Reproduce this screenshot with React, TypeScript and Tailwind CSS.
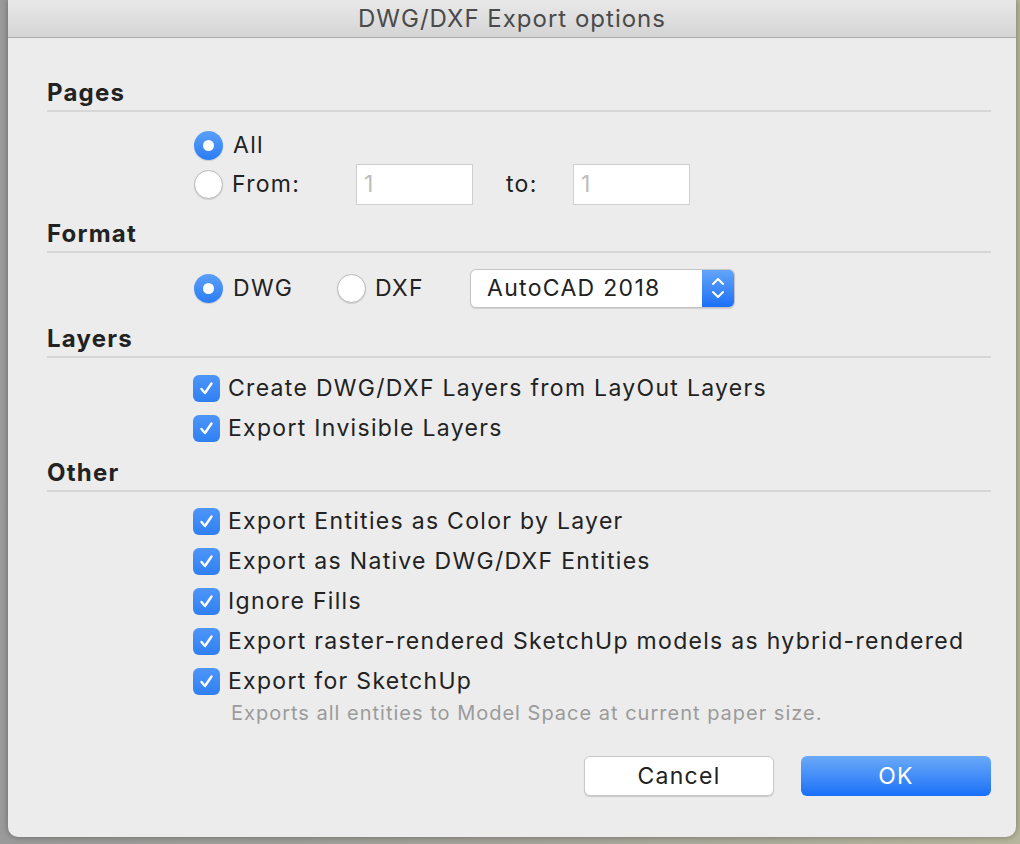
import React from "react";

const font = { fontFamily: "Inter, 'Liberation Sans', sans-serif" };
const body = "text-[23px] tracking-[1.3px] text-[#222]";

function Radio({ checked }: { checked?: boolean }) {
  if (checked) {
    return (
      <span className="flex items-center justify-center w-[29px] h-[29px] rounded-full bg-gradient-to-b from-[#5aa0f9] to-[#2a7cf5] shadow-[0_1px_1px_rgba(0,0,0,0.15)]">
        <span className="w-[11px] h-[11px] rounded-full bg-white" />
      </span>
    );
  }
  return (
    <span className="block w-[29px] h-[29px] rounded-full bg-white border border-[#b8b8b8] shadow-[0_1px_1px_rgba(0,0,0,0.12)]" />
  );
}

function Check() {
  return (
    <span className="flex items-center justify-center w-[27px] h-[27px] rounded-[6px] bg-gradient-to-b from-[#4d95f8] to-[#2f80f4] shrink-0">
      <svg width="17" height="17" viewBox="0 0 17 17" fill="none">
        <path d="M3.5 9 L7 13 L13.5 3.5" stroke="white" strokeWidth="2.4" strokeLinecap="round" strokeLinejoin="round" />
      </svg>
    </span>
  );
}

function Section({ title, mt }: { title: string; mt: string }) {
  return (
    <div className={mt}>
      <div className="text-[24px] leading-[28px] tracking-[1.2px] font-bold text-[#222]">{title}</div>
      <div className="mt-[3px] h-[2px] bg-[#d6d6d6]" />
    </div>
  );
}

function CheckRow({ label }: { label: string }) {
  return (
    <div className="flex items-center h-[40px] pl-[146px] gap-[8px]">
      <Check />
      <span className={body}>{label}</span>
    </div>
  );
}

export default function App() {
  return (
    <div className="w-[1020px] h-[844px] bg-gradient-to-r from-[#9a9a9a] via-[#a3a39a] to-[#b6b69e] flex pl-[8px] pr-[4px] pb-[7px]" style={font}>
      <div className="flex-1 flex flex-col bg-[#ececec] rounded-b-[10px] shadow-[0_0_6px_rgba(0,0,0,0.35)] overflow-hidden">
        <div className="h-[38px] shrink-0 flex items-center justify-center bg-gradient-to-b from-[#e9e9e9] to-[#d4d4d4] border-b border-[#a9a9a9]">
          <span className="text-[24px] tracking-[1px] text-[#4a4a4a]">DWG/DXF Export options</span>
        </div>

        <div className="flex flex-col pl-[39px] pr-[25px]">
          <Section title="Pages" mt="mt-[41px]" />
          <div className="mt-[14px] flex items-center h-[39px] pl-[147px] gap-[10px]">
            <Radio checked />
            <span className={body}>All</span>
          </div>
          <div className="flex items-center h-[39px] pl-[147px]">
            <Radio />
            <span className={`ml-[9px] w-[124px] ${body}`}>From:</span>
            <div className="w-[117px] h-[41px] bg-white border border-[#cfcfcf] flex items-center pl-[7px] text-[23px] text-[#bdbdbd]">1</div>
            <span className={`ml-[33px] w-[67px] ${body}`}>to:</span>
            <div className="w-[117px] h-[41px] bg-white border border-[#cfcfcf] flex items-center pl-[7px] text-[23px] text-[#bdbdbd]">1</div>
          </div>

          <Section title="Format" mt="mt-[16px]" />
          <div className="mt-[15px] flex items-center h-[40px] pl-[147px]">
            <Radio checked />
            <span className={`ml-[10px] w-[104px] ${body}`}>DWG</span>
            <Radio />
            <span className={`ml-[9px] w-[95px] ${body}`}>DXF</span>
            <div className="w-[265px] h-[39px] bg-white rounded-[6px] border border-[#c4c4c4] shadow-[0_1px_1px_rgba(0,0,0,0.12)] flex items-center overflow-hidden">
              <span className={`flex-1 pl-[16px] ${body}`}>AutoCAD 2018</span>
              <span className="w-[32px] h-full bg-gradient-to-b from-[#62a4f9] to-[#1a70f7] flex items-center justify-center">
                <svg width="16" height="26" viewBox="0 0 16 26" fill="none">
                  <path d="M3 9 L8 4 L13 9" stroke="white" strokeWidth="2" strokeLinecap="round" strokeLinejoin="round" />
                  <path d="M3 17 L8 22 L13 17" stroke="white" strokeWidth="2" strokeLinecap="round" strokeLinejoin="round" />
                </svg>
              </span>
            </div>
          </div>

          <Section title="Layers" mt="mt-[17px]" />
          <div className="mt-[10px]">
            <CheckRow label="Create DWG/DXF Layers from LayOut Layers" />
            <CheckRow label="Export Invisible Layers" />
          </div>

          <Section title="Other" mt="mt-[11px]" />
          <div className="mt-[9px]">
            <CheckRow label="Export Entities as Color by Layer" />
            <CheckRow label="Export as Native DWG/DXF Entities" />
            <CheckRow label="Ignore Fills" />
            <CheckRow label="Export raster-rendered SketchUp models as hybrid-rendered" />
            <CheckRow label="Export for SketchUp" />
            <div className="pl-[184px] h-[24px] leading-[24px] text-[20px] tracking-[1px] text-[#9b9b9b]">
              Exports all entities to Model Space at current paper size.
            </div>
          </div>

          <div className="mt-[31px] flex justify-end gap-[27px]">
            <button className={`w-[190px] h-[40px] bg-white rounded-[6px] border border-[#c8c8c8] shadow-[0_1px_1px_rgba(0,0,0,0.15)] ${body}`}>
              Cancel
            </button>
            <button className="w-[190px] h-[40px] rounded-[6px] bg-gradient-to-b from-[#6aa9f8] to-[#176ff7] text-[23px] tracking-[1.3px] text-white">
              OK
            </button>
          </div>
        </div>
      </div>
    </div>
  );
}
